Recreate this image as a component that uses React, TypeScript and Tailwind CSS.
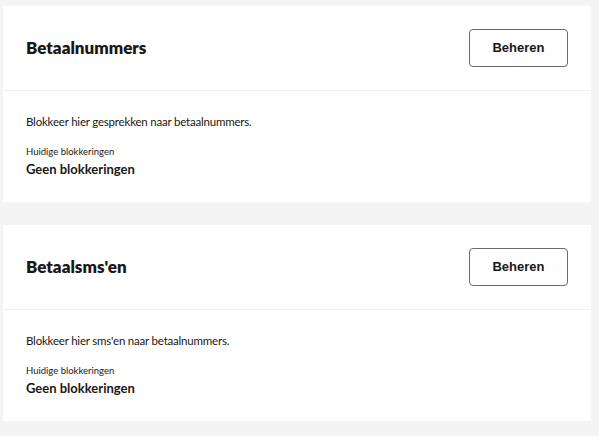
import React from "react";

const lato = { fontFamily: "Lato, 'Liberation Sans', Arial, sans-serif" };

function Card({ title, desc }: { title: string; desc: string }) {
  return (
    <section className="bg-white">
      <div className="flex items-center justify-between h-[85px] pl-[23px] pr-[23px] border-b border-[#f0f0f0]">
        <h2 className="text-[17px] leading-[22px] font-extrabold text-[#1b1715]" style={lato}>
          {title}
        </h2>
        <button
          className="w-[99px] h-[38px] rounded-[4px] border-[1.5px] border-[#6e6a68] bg-white text-[13px] font-bold text-[#1b1715]"
          style={{ fontFamily: "'Liberation Sans', Arial, sans-serif" }}
        >
          Beheren
        </button>
      </div>
      <div className="pl-[23px] pt-[21px] pb-[25px]" style={lato}>
        <p className="text-[11.5px] leading-[20px] tracking-[-0.2px] text-[#1b1715]">{desc}</p>
        <p className="mt-[14px] text-[9.5px] leading-[12px] text-[#1b1715]">Huidige blokkeringen</p>
        <p className="mt-[3px] text-[13px] leading-[16px] font-bold text-[#1b1715]">Geen blokkeringen</p>
      </div>
    </section>
  );
}

export default function App() {
  return (
    <div className="w-[599px] h-[436px] bg-[#f4f4f4] pl-[3px] pr-[8px] pt-[6px] flex flex-col gap-[23px] overflow-hidden">
      <Card title="Betaalnummers" desc="Blokkeer hier gesprekken naar betaalnummers." />
      <Card title="Betaalsms'en" desc="Blokkeer hier sms'en naar betaalnummers." />
    </div>
  );
}
